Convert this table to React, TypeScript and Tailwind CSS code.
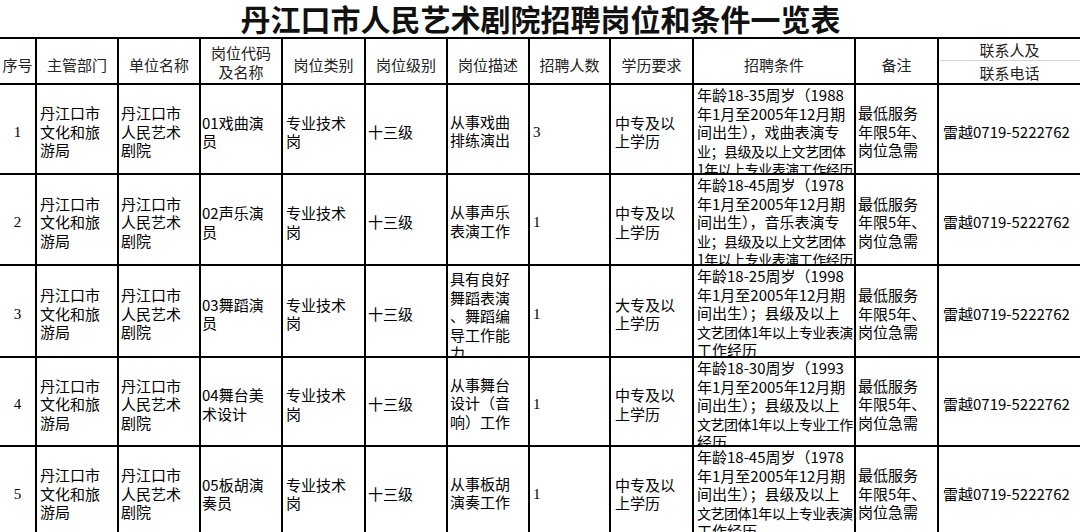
import React from "react";

interface Post {
  no: string;
  dept: string[];
  unit: string[];
  code: string[];
  type: string[];
  level: string;
  desc: string[];
  count: string;
  edu: string[];
  cond: string[];
  note: string[];
  contact: string;
}

const dept = ["丹江口市", "文化和旅", "游局"];
const unit = ["丹江口市", "人民艺术", "剧院"];
const type = ["专业技术", "岗"];
const note = ["最低服务", "年限5年、", "岗位急需"];
const contact = "雷越0719-5222762";

const posts: Post[] = [
  {
    no: "1", dept, unit, type, note, contact,
    code: ["01戏曲演", "员"],
    level: "十三级",
    desc: ["从事戏曲", "排练演出"],
    count: "3",
    edu: ["中专及以", "上学历"],
    cond: ["年龄18-35周岁（1988", "年1月至2005年12月期", "间出生），戏曲表演专", "业；县级及以上文艺团体", "1年以上专业表演工作经历"],
  },
  {
    no: "2", dept, unit, type, note, contact,
    code: ["02声乐演", "员"],
    level: "十三级",
    desc: ["从事声乐", "表演工作"],
    count: "1",
    edu: ["中专及以", "上学历"],
    cond: ["年龄18-45周岁（1978", "年1月至2005年12月期", "间出生），音乐表演专", "业；县级及以上文艺团体", "1年以上专业表演工作经历"],
  },
  {
    no: "3", dept, unit, type, note, contact,
    code: ["03舞蹈演", "员"],
    level: "十三级",
    desc: ["具有良好", "舞蹈表演", "、舞蹈编", "导工作能", "力"],
    count: "1",
    edu: ["大专及以", "上学历"],
    cond: ["年龄18-25周岁（1998", "年1月至2005年12月期", "间出生）；县级及以上", "文艺团体1年以上专业表演", "工作经历"],
  },
  {
    no: "4", dept, unit, type, note, contact,
    code: ["04舞台美", "术设计"],
    level: "十三级",
    desc: ["从事舞台", "设计（音", "响）工作"],
    count: "1",
    edu: ["中专及以", "上学历"],
    cond: ["年龄18-30周岁（1993", "年1月至2005年12月期", "间出生）；县级及以上", "文艺团体1年以上专业工作", "经历"],
  },
  {
    no: "5", dept, unit, type, note, contact,
    code: ["05板胡演", "奏员"],
    level: "十三级",
    desc: ["从事板胡", "演奏工作"],
    count: "1",
    edu: ["中专及以", "上学历"],
    cond: ["年龄18-45周岁（1978", "年1月至2005年12月期", "间出生）；县级及以上", "文艺团体1年以上专业表演", "工作经历"],
  },
];

const headers: string[][] = [
  ["序号"], ["主管部门"], ["单位名称"], ["岗位代码", "及名称"], ["岗位类别"], ["岗位级别"],
  ["岗位描述"], ["招聘人数"], ["学历要求"], ["招聘条件"], ["备注"],
];

// rough width at 15px, to squeeze the long lines of 招聘条件
function isLong(s: string) {
  let w = 0;
  for (const ch of s) w += ch.charCodeAt(0) < 128 ? 8.3 : 15;
  return w > 154;
}

function Cell({ lines, className = "" }: { lines: string[]; className?: string }) {
  return (
    <div className={`border-r-2 border-b-2 border-black overflow-hidden flex flex-col [justify-content:safe_center] text-[15px] leading-[18.5px] text-black ${className}`}>
      {lines.map((l, i) => (
        <div key={i} className="whitespace-nowrap">{l}</div>
      ))}
    </div>
  );
}

export default function App() {
  return (
    <div className="w-[1080px] h-[532px] overflow-hidden bg-white font-['Noto_Sans_CJK_SC',sans-serif]">
      <div className="h-[37px] flex items-center justify-center">
        <h1 className="text-[30px] leading-[36px] font-bold text-[#111] pl-[1px] pb-[2px] whitespace-nowrap">
          丹江口市人民艺术剧院招聘岗位和条件一览表
        </h1>
      </div>

      <div className="grid grid-cols-[37px_82px_82px_82px_83px_82px_82px_81px_83px_162px_83px_141px] grid-rows-[46px_90px_91px_92px_89px_90px] border-t-2 border-black">
        {/* header */}
        {headers.map((h, i) => (
          <div
            key={i}
            className={`border-r-2 border-b-2 border-black flex flex-col items-center justify-center text-[15px] leading-[19px] text-[#222] ${h.length > 1 ? "pt-[2px]" : "pt-[6px]"}`}
          >
            {h.map((l, j) => (
              <div key={j} className="whitespace-nowrap">{l}</div>
            ))}
          </div>
        ))}
        <div className="border-b-2 border-black flex flex-col text-[15px] leading-[18px] text-[#222]">
          <div className="h-[22px] flex items-center justify-center pt-[1px] border-b border-[#d4d4d4]">联系人及</div>
          <div className="h-[22px] flex items-center justify-center pt-[1px]">联系电话</div>
        </div>

        {/* body */}
        {posts.map((p) => (
          <React.Fragment key={p.no}>
            <Cell lines={[p.no]} className="items-center pt-[6px] font-['Liberation_Serif',serif]" />
            <Cell lines={p.dept} className="pl-[3px] pt-[6px]" />
            <Cell lines={p.unit} className="pl-[2px] pt-[6px]" />
            <Cell lines={p.code} className="pl-[1px] pt-[6px]" />
            <Cell lines={p.type} className="pl-[3px] pt-[6px]" />
            <Cell lines={[p.level]} className="pl-[2px] pt-[6px]" />
            <Cell lines={p.desc} className="pl-[2px] pt-[4px]" />
            <Cell lines={[p.count]} className="pl-[3px] pt-[6px] font-['Liberation_Serif',serif]" />
            <Cell lines={p.edu} className="pl-[4px] pt-[6px]" />
            <div className="border-r-2 border-b-2 border-black overflow-hidden flex flex-col [justify-content:safe_center] pl-[3px] pt-[1px] text-black">
              {p.cond.map((l, i) => (
                <div
                  key={i}
                  className={`whitespace-nowrap leading-[18.5px] ${isLong(l) ? "text-[14px] tracking-[-0.5px]" : "text-[15px]"}`}
                >
                  {l}
                </div>
              ))}
            </div>
            <Cell lines={p.note} className="pl-[2px] pt-[6px]" />
            <div className="border-b-2 border-black flex items-center pl-[4px] pt-[6px] text-[15px] text-black whitespace-nowrap overflow-hidden">
              {p.contact}
            </div>
          </React.Fragment>
        ))}
      </div>
    </div>
  );
}
